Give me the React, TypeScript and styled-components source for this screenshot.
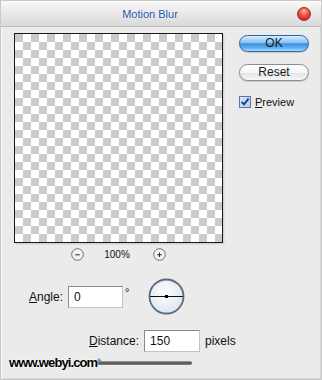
import styled, { createGlobalStyle } from "styled-components";

const GlobalStyle = createGlobalStyle`
  html, body {
    margin: 0;
    padding: 0;
    background: #ebebeb;
  }
  * { box-sizing: border-box; }
`

const Window = styled.div`
  position: relative;
  width: 322px;
  height: 380px;
  display: flex;
  flex-direction: column;
  background: #ebebeb;
  border: 1px solid #c9c9c9;
  box-shadow: inset 1px 0 0 #f8f8f8, inset -1px -1px 0 #d6d6d6;
  font-family: "Liberation Sans", Arial, sans-serif;
  color: #111;
  overflow: hidden;
`

const TitleBar = styled.div`
  height: 26px;
  flex: none;
  display: flex;
  align-items: center;
  padding: 1px 10px 0 0;
  background: linear-gradient(#fafafa, #e9e9e9 45%, #d9d9d9);
  border-bottom: 1px solid #bcbcbc;
`

const Title = styled.div`
  flex: 1;
  text-align: center;
  font-size: 11px;
  color: #2b52b6;
  padding-left: 2px;
  text-shadow: 0 0 3px #fff;
`

const CloseDot = styled.div`
  width: 14px;
  height: 14px;
  border-radius: 50%;
  background: radial-gradient(circle at 50% 30%, #ffb0a8 0, #f04a3c 45%, #b81a12 100%);
  border: 1px solid #9a2a22;
`

const Main = styled.div`
  display: flex;
  gap: 16px;
  padding: 6px 0 0 13px;
`

const LeftCol = styled.div`
  display: flex;
  flex-direction: column;
`

const Preview = styled.div`
  width: 209px;
  height: 210px;
  border: 1px solid #1a1a1a;
  background: repeating-conic-gradient(#fff 0 25%, #cbcbcb 0 50%) 0 0 / 16px 16px;
  box-shadow: 1px 1px 0 #d0d0d0, 2px 2px 0 #e0e0e0;
`

const ZoomBar = styled.div`
  display: flex;
  align-items: center;
  justify-content: center;
  margin-top: 5px;
  height: 12px;
  font-size: 10px;
`

const ZoomText = styled.span`
  margin: 0 23px 0 20px;
`

const RightCol = styled.div`
  display: flex;
  flex-direction: column;
  padding-top: 2px;
`

const PillButton = styled.button<{ $primary?: boolean }>`
  width: 70px;
  height: 17px;
  margin-bottom: 12px;
  padding: 0;
  border-radius: 9px;
  font-family: "Liberation Sans", Arial, sans-serif;
  font-size: 12px;
  line-height: 15px;
  color: #1a1a1a;
  border: 1px solid ${p => (p.$primary ? "#2f62a6" : "#8d8d8d")};
  background: ${p =>
    p.$primary
      ? "linear-gradient(#d6ecff 0%, #86c2f4 45%, #3f8ede 52%, #5fb0f2 80%, #a9dcff 100%)"
      : "linear-gradient(#ffffff 0%, #f6f6f6 50%, #e4e4e4 55%, #f7f7f7 100%)"};
  box-shadow: 0 1px 1px rgba(0, 0, 0, 0.15);
`

const CheckRow = styled.label`
  display: flex;
  align-items: center;
  gap: 4px;
  margin-top: 3px;
  font-size: 11px;
`

const Row = styled.div<{ $indent: number }>`
  display: flex;
  align-items: center;
  padding-left: ${p => p.$indent}px;
`

const AngleRow = styled(Row)`
  margin-top: 18px;
`

const DistanceRow = styled(Row)`
  margin-top: 15px;
`

const Label = styled.span`
  font-size: 12px;
  margin-right: 5px;
`

const Field = styled.div<{ $w: number }>`
  width: ${p => p.$w}px;
  height: 22px;
  background: #fff;
  border: 1px solid #8a8a8a;
  border-right-color: #c4c4c4;
  border-bottom-color: #c4c4c4;
  font-size: 12px;
  line-height: 20px;
  padding-left: 5px;
`

const Degree = styled.span`
  font-size: 11px;
  align-self: flex-start;
  margin: 8px 19px 0 2px;
`

const Unit = styled.span`
  font-size: 12px;
  margin-left: 5px;
`

const SliderRow = styled.div`
  margin-top: 7px;
  padding-left: 95px;
  height: 8px;
  display: flex;
  align-items: center;
`

const Track = styled.div`
  position: relative;
  width: 96px;
  height: 4px;
  border-radius: 2px;
  background: linear-gradient(#a8a8a8, #4a4a4a 50%, #8a8a8a);
`

const Knob = styled.div`
  position: absolute;
  left: 0;
  top: -3px;
  width: 0;
  height: 0;
  border-left: 3px solid transparent;
  border-right: 3px solid transparent;
  border-bottom: 4px solid #8a8a8a;
`

const Watermark = styled.div`
  position: absolute;
  left: 8px;
  top: 354px;
  font-family: "Liberation Sans", Arial, sans-serif;
  font-weight: bold;
  font-size: 13px;
  letter-spacing: -0.9px;
  color: #000;
  text-shadow: 0 0 2px #fff, 0 0 2px #fff;
`

function RoundIcon({ plus }: { plus?: boolean }) {
  return (
    <svg width="13" height="13" viewBox="0 0 13 13">
      <circle cx="6.5" cy="6.5" r="5.8" fill="#f2f2f2" stroke="#6e6e6e" strokeWidth="1" />
      <line x1="4.3" y1="6.8" x2="8.7" y2="6.8" stroke="#222" strokeWidth="1" />
      {plus && <line x1="6.5" y1="4.6" x2="6.5" y2="9" stroke="#222" strokeWidth="1" />}
    </svg>
  )
}

function CheckBox() {
  return (
    <svg width="12" height="12" viewBox="0 0 12 12">
      <defs>
        <linearGradient id="cb" x1="0" y1="0" x2="1" y2="1">
          <stop offset="0" stopColor="#dfe9f7" />
          <stop offset="1" stopColor="#b4c8e6" />
        </linearGradient>
      </defs>
      <rect x="0.5" y="0.5" width="11" height="11" fill="url(#cb)" stroke="#5578ad" />
      <path d="M2.6 5.8 L5 8.4 L9.6 2.6" fill="none" stroke="#173a8c" strokeWidth="1.8" />
    </svg>
  )
}

function Dial() {
  return (
    <svg width="37" height="37" viewBox="0 0 37 37">
      <defs>
        <radialGradient id="dial" cx="0.45" cy="0.4" r="0.6">
          <stop offset="0" stopColor="#ffffff" />
          <stop offset="1" stopColor="#dde5ee" />
        </radialGradient>
      </defs>
      <circle cx="18.5" cy="18.5" r="17" fill="url(#dial)" stroke="#5b6c7e" strokeWidth="1.8" />
      <line x1="2" y1="18.5" x2="35" y2="18.5" stroke="#111" strokeWidth="1.2" />
      <rect x="17" y="17" width="3" height="3" fill="#000" />
    </svg>
  )
}

export default function App() {
  return (
    <Window>
      <GlobalStyle />
      <TitleBar>
        <Title>Motion Blur</Title>
        <CloseDot />
      </TitleBar>
      <Main>
        <LeftCol>
          <Preview />
          <ZoomBar>
            <RoundIcon />
            <ZoomText>100%</ZoomText>
            <RoundIcon plus />
          </ZoomBar>
        </LeftCol>
        <RightCol>
          <PillButton $primary>OK</PillButton>
          <PillButton>Reset</PillButton>
          <CheckRow>
            <CheckBox />
            <span><u>P</u>review</span>
          </CheckRow>
        </RightCol>
      </Main>
      <AngleRow $indent={28}>
        <Label><u>A</u>ngle:</Label>
        <Field $w={55}>0</Field>
        <Degree>°</Degree>
        <Dial />
      </AngleRow>
      <DistanceRow $indent={88}>
        <Label><u>D</u>istance:</Label>
        <Field $w={56}>150</Field>
        <Unit>pixels</Unit>
      </DistanceRow>
      <SliderRow>
        <Track>
          <Knob />
        </Track>
      </SliderRow>
      <Watermark>www.webyi.com</Watermark>
    </Window>
  )
}
